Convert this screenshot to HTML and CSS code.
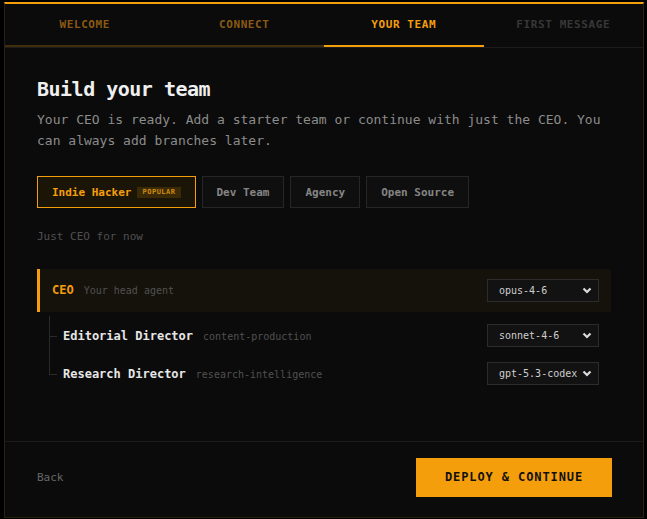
FILE: index.html
```html
<!DOCTYPE html>
<html lang="en">
<head>
    <meta charset="UTF-8">
    <meta name="viewport" content="width=device-width, initial-scale=1.0">
    <title>Onboarding - Your Team</title>
    <link rel="stylesheet" href="styles.css">
</head>
<body>
    <div class="wizard">
        <div class="steps">
            <div class="step done">Welcome</div>
            <div class="step done">Connect</div>
            <div class="step active">Your Team</div>
            <div class="step">First Message</div>
        </div>

        <div class="content">
            <h1>Build your team</h1>
            <p class="lead">Your CEO is ready. Add a starter team or continue with just the CEO. You can always add branches later.</p>

            <div class="templates">
                <button class="template selected">Indie Hacker <span class="badge">Popular</span></button>
                <button class="template">Dev Team</button>
                <button class="template">Agency</button>
                <button class="template">Open Source</button>
            </div>

            <div class="hint">Just CEO for now</div>

            <div class="org">
                <div class="agent ceo">
                    <div class="agent-info">
                        <span class="agent-name">CEO</span>
                        <span class="agent-desc">Your head agent</span>
                    </div>
                    <div class="model-select">
                        <span>opus-4-6</span>
                        <svg width="10" height="7" viewBox="0 0 10 7"><path d="M1.5 1.5 L5 5 L8.5 1.5" fill="none" stroke="#dcdcdc" stroke-width="2.2"/></svg>
                    </div>
                </div>
                <div class="children">
                    <div class="agent child">
                        <div class="agent-info">
                            <span class="agent-name">Editorial Director</span>
                            <span class="agent-desc">content-production</span>
                        </div>
                        <div class="model-select">
                            <span>sonnet-4-6</span>
                            <svg width="10" height="7" viewBox="0 0 10 7"><path d="M1.5 1.5 L5 5 L8.5 1.5" fill="none" stroke="#dcdcdc" stroke-width="2.2"/></svg>
                        </div>
                    </div>
                    <div class="agent child">
                        <div class="agent-info">
                            <span class="agent-name">Research Director</span>
                            <span class="agent-desc">research-intelligence</span>
                        </div>
                        <div class="model-select">
                            <span>gpt-5.3-codex</span>
                            <svg width="10" height="7" viewBox="0 0 10 7"><path d="M1.5 1.5 L5 5 L8.5 1.5" fill="none" stroke="#dcdcdc" stroke-width="2.2"/></svg>
                        </div>
                    </div>
                </div>
            </div>
        </div>

        <div class="footer">
            <button class="back">Back</button>
            <button class="deploy">Deploy &amp; Continue</button>
        </div>
    </div>
</body>
</html>
```

FILE: styles.css
```css
* {
    margin: 0;
    padding: 0;
    box-sizing: border-box;
}

body {
    height: 100vh;
    display: flex;
    justify-content: center;
    align-items: center;
    background: #000;
    font-family: "DejaVu Sans Mono", "Liberation Mono", monospace;
    overflow: hidden;
}

button {
    font-family: inherit;
    cursor: pointer;
}

/* Wizard frame */
.wizard {
    width: 640px;
    height: 516px;
    margin-left: 1px;
    background: #0b0b0b;
    border: 1px solid #2a2110;
    border-top: 2px solid #f59e0b;
    display: flex;
    flex-direction: column;
}

/* Step tabs */
.steps {
    display: flex;
    border-bottom: 1px solid #1c1c1c;
}

.step {
    flex: 1;
    height: 43px;
    display: flex;
    align-items: center;
    justify-content: center;
    font-size: 11px;
    font-weight: bold;
    letter-spacing: 0.6px;
    text-transform: uppercase;
    color: #383838;
    border-bottom: 2px solid transparent;
}

.step.done {
    color: #8a5a12;
    border-bottom-color: #3f2d0c;
}

.step.active {
    color: #f59e0b;
    border-bottom-color: #f59e0b;
}

/* Main content */
.content {
    flex: 1;
    padding: 29px 32px 0;
}

h1 {
    font-size: 20px;
    line-height: 24px;
    letter-spacing: -0.5px;
    color: #efefef;
}

.lead {
    margin-top: 8px;
    font-size: 13px;
    line-height: 21px;
    color: #8c8c8c;
}

.templates {
    display: flex;
    gap: 6px;
    margin-top: 25px;
}

.template {
    height: 32px;
    padding: 1px 14px 0;
    display: flex;
    align-items: center;
    gap: 6px;
    background: #0f0f0f;
    border: 1px solid #262626;
    color: #858585;
    font-size: 11px;
    font-weight: bold;
}

.template.selected {
    background: #1b1508;
    border-color: #f59e0b;
    color: #f59e0b;
}

.badge {
    height: 11px;
    padding: 0 5px;
    display: flex;
    align-items: center;
    background: #3a2a08;
    color: #d08a0c;
    font-size: 7px;
    letter-spacing: 0.5px;
    text-transform: uppercase;
}

.hint {
    margin-top: 21px;
    font-size: 11px;
    line-height: 16px;
    color: #505050;
}

/* Org tree */
.org {
    margin-top: 24px;
}

.agent {
    display: flex;
    align-items: center;
    justify-content: space-between;
    padding-right: 12px;
}

.agent.ceo {
    height: 43px;
    padding-left: 12px;
    background: #15120b;
    border-left: 3px solid #f59e0b;
}

.agent-info {
    display: flex;
    align-items: baseline;
    gap: 10px;
}

.agent-name {
    font-size: 12px;
    font-weight: bold;
    color: #e6e6e6;
}

.ceo .agent-name {
    color: #f59e0b;
}

.agent-desc {
    font-size: 10px;
    color: #515151;
}

.children {
    margin-top: 5px;
}

.agent.child {
    position: relative;
    height: 38px;
    padding-left: 26px;
}

/* tree connectors */
.agent.child::before {
    content: "";
    position: absolute;
    left: 12px;
    top: -1px;
    bottom: 0;
    border-left: 1px solid #2a2a2a;
}

.agent.child:last-child::before {
    bottom: 50%;
}

.agent.child::after {
    content: "";
    position: absolute;
    left: 12px;
    top: 50%;
    width: 8px;
    border-top: 1px solid #2a2a2a;
}

.model-select {
    width: 112px;
    height: 23px;
    padding: 0 6px 0 11px;
    display: flex;
    align-items: center;
    justify-content: space-between;
    background: #121212;
    border: 1px solid #2c2c2c;
    font-size: 10px;
    color: #cfcfcf;
}

/* Footer */
.footer {
    height: 76px;
    border-top: 1px solid #1c1c1c;
    padding: 0 31px 4px 32px;
    display: flex;
    align-items: center;
    justify-content: space-between;
}

.back {
    background: none;
    border: none;
    font-size: 11px;
    color: #686868;
}

.deploy {
    width: 196px;
    height: 39px;
    background: #f59e0b;
    border: none;
    color: #111;
    font-size: 12px;
    font-weight: bold;
    letter-spacing: 0.9px;
    text-transform: uppercase;
}
```
